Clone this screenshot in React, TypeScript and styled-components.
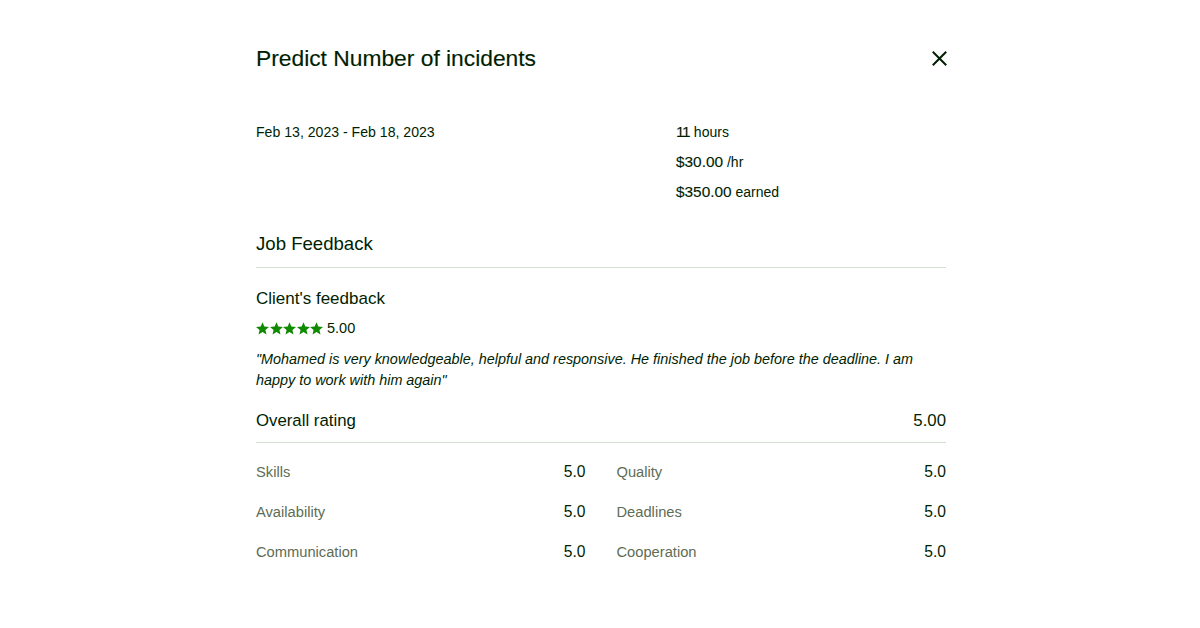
import React from "react";
import styled, { createGlobalStyle } from "styled-components";

const Global = createGlobalStyle`
  html, body { margin: 0; padding: 0; background: #fff; }
  body { font-family: "Liberation Sans", Arial, sans-serif; color: #001e00; }
  * { box-sizing: border-box; }
`;

const Page = styled.div`
  width: 1200px;
  min-height: 628px;
  display: flex;
  justify-content: center;
  padding-left: 2px;
`;

const Modal = styled.div`
  width: 690px;
  padding-top: 44px;
  display: flex;
  flex-direction: column;
`;

const Header = styled.div`
  display: flex;
  align-items: center;
  justify-content: space-between;
  height: 28px;
`;

const Title = styled.h2`
  margin: 0;
  font-size: 22.8px;
  font-weight: 400;
  line-height: 28px;
  -webkit-text-stroke: 0.15px currentColor;
`;

const CloseButton = styled.button`
  border: 0;
  background: none;
  padding: 0;
  width: 16px;
  height: 16px;
  margin-right: -1px;
  display: flex;
  align-items: center;
  justify-content: center;
  cursor: pointer;
  color: #001e00;
`;

const Summary = styled.div`
  display: grid;
  grid-template-columns: 420px 1fr;
  margin-top: 50px;
  font-size: 14px;
`;

const DateRange = styled.div`
  line-height: 20px;
  font-size: 14.1px;
`;

const Stats = styled.div`
  display: flex;
  flex-direction: column;
  gap: 10px;
`;

const Stat = styled.div`
  line-height: 20px;
  color: #001e00;
`;

const StatNum = styled.span<{ $tight?: boolean }>`
  font-size: 15.4px;
  -webkit-text-stroke: 0.12px currentColor;
  letter-spacing: ${(p) => (p.$tight ? "-1.5px" : "0")};
  margin-right: ${(p) => (p.$tight ? "1px" : "0")};
`;

const SectionTitle = styled.h3`
  margin: 30px 0 0;
  font-size: 18.6px;
  font-weight: 400;
  line-height: 24px;
  padding-bottom: 11px;
  border-bottom: 1px solid #d5e0d5;
`;

const SubTitle = styled.h4`
  margin: 20px 0 0;
  font-size: 17px;
  font-weight: 400;
  line-height: 22px;
`;

const RatingRow = styled.div`
  display: flex;
  align-items: center;
  gap: 4px;
  margin-top: 8px;
  font-size: 14.5px;
  line-height: 20px;
`;

const Stars = styled.div`
  display: flex;
  gap: 0.5px;
`;

const Quote = styled.p`
  margin: 11px 0 0;
  font-size: 14.4px;
  font-style: italic;
  line-height: 21px;
  color: #001e00;
`;

const OverallRow = styled.div`
  display: flex;
  justify-content: space-between;
  align-items: center;
  margin-top: 19px;
  padding-bottom: 10px;
  border-bottom: 1px solid #d5e0d5;
  font-size: 16.8px;
  line-height: 22px;
`;

const ScoreGrid = styled.div`
  display: grid;
  grid-template-columns: 1fr 1fr;
  column-gap: 31px;
  row-gap: 20px;
  margin-top: 19px;
`;

const ScoreItem = styled.div`
  display: flex;
  justify-content: space-between;
  align-items: baseline;
  font-size: 14.7px;
  line-height: 20px;
`;

const ScoreLabel = styled.span`
  color: #5e6d55;
`;

const ScoreValue = styled.span`
  color: #001e00;
  font-size: 15.6px;
`;

const Star = () => (
  <svg width="13" height="13" viewBox="1 1 22 22">
    <path
      fill="#108a00"
      d="M12 1.3L15.06 8.59L22.94 9.25L16.95 14.41L18.76 22.1L12 18L5.24 22.1L7.05 14.41L1.06 9.25L8.94 8.59Z"
    />
  </svg>
);

const scores: [string, string][] = [
  ["Skills", "5.0"],
  ["Quality", "5.0"],
  ["Availability", "5.0"],
  ["Deadlines", "5.0"],
  ["Communication", "5.0"],
  ["Cooperation", "5.0"],
];

export default function App() {
  return (
    <>
      <Global />
      <Page>
        <Modal>
          <Header>
            <Title>Predict Number of incidents</Title>
            <CloseButton aria-label="Close">
              <svg width="15" height="15" viewBox="0 0 15 15">
                <path d="M1.5 1.5l12 12M13.5 1.5l-12 12" stroke="#001e00" strokeWidth="2" strokeLinecap="square" />
              </svg>
            </CloseButton>
          </Header>
          <Summary>
            <DateRange>Feb 13, 2023 - Feb 18, 2023</DateRange>
            <Stats>
              <Stat><StatNum $tight>11</StatNum> hours</Stat>
              <Stat><StatNum>$30.00</StatNum> /hr</Stat>
              <Stat><StatNum>$350.00</StatNum> earned</Stat>
            </Stats>
          </Summary>
          <SectionTitle>Job Feedback</SectionTitle>
          <SubTitle>Client's feedback</SubTitle>
          <RatingRow>
            <Stars>
              <Star /><Star /><Star /><Star /><Star />
            </Stars>
            <span>5.00</span>
          </RatingRow>
          <Quote>
            "Mohamed is very knowledgeable, helpful and responsive. He finished the job before the deadline. I am happy to work with him again"
          </Quote>
          <OverallRow>
            <span>Overall rating</span>
            <span>5.00</span>
          </OverallRow>
          <ScoreGrid>
            {scores.map(([label, value]) => (
              <ScoreItem key={label}>
                <ScoreLabel>{label}</ScoreLabel>
                <ScoreValue>{value}</ScoreValue>
              </ScoreItem>
            ))}
          </ScoreGrid>
        </Modal>
      </Page>
    </>
  );
}
